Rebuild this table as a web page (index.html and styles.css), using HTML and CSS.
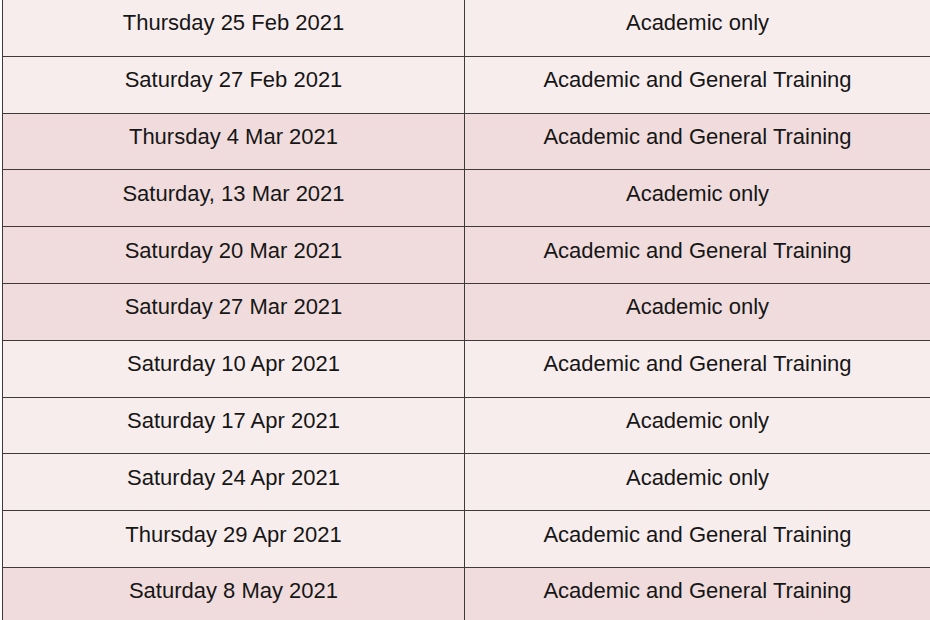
FILE: index.html
```html
<!DOCTYPE html>
<html>
<head>
<meta charset="utf-8">
<link rel="stylesheet" href="styles.css">
</head>
<body>
<div class="table">
  <div class="row light"><div class="cell">Thursday 25 Feb 2021</div><div class="cell">Academic only</div></div>
  <div class="row light"><div class="cell">Saturday 27 Feb 2021</div><div class="cell">Academic and General Training</div></div>
  <div class="row dark"><div class="cell">Thursday 4 Mar 2021</div><div class="cell">Academic and General Training</div></div>
  <div class="row dark"><div class="cell">Saturday, 13 Mar 2021</div><div class="cell">Academic only</div></div>
  <div class="row dark"><div class="cell">Saturday 20 Mar 2021</div><div class="cell">Academic and General Training</div></div>
  <div class="row dark"><div class="cell">Saturday 27 Mar 2021</div><div class="cell">Academic only</div></div>
  <div class="row light"><div class="cell">Saturday 10 Apr 2021</div><div class="cell">Academic and General Training</div></div>
  <div class="row light"><div class="cell">Saturday 17 Apr 2021</div><div class="cell">Academic only</div></div>
  <div class="row light"><div class="cell">Saturday 24 Apr 2021</div><div class="cell">Academic only</div></div>
  <div class="row light"><div class="cell">Thursday 29 Apr 2021</div><div class="cell">Academic and General Training</div></div>
  <div class="row dark"><div class="cell">Saturday 8 May 2021</div><div class="cell">Academic and General Training</div></div>
</div>
</body>
</html>
```

FILE: styles.css
```css
html, body {
  margin: 0;
  padding: 0;
  background: #ffffff;
  overflow: hidden;
}
.table {
  margin: -1px 0 0 2px;
  width: 927px;
  border-left: 1px solid #3f3939;
  border-right: 1px solid #3f3939;
  border-top: 1px solid #c8c0c0;
  font-family: "Liberation Sans", Arial, sans-serif;
  font-size: 22px;
  color: #161616;
}
.row {
  display: grid;
  grid-template-columns: 461px 1fr;
  height: 56.8px;
  box-sizing: border-box;
  border-bottom: 1px solid #3f3939;
}
.light { background: #f8eded; }
.dark { background: #f0dcdc; }
.cell {
  display: flex;
  align-items: center;
  justify-content: center;
  padding-bottom: 9px;
}
.cell + .cell {
  border-left: 1px solid #3f3939;
}
```
